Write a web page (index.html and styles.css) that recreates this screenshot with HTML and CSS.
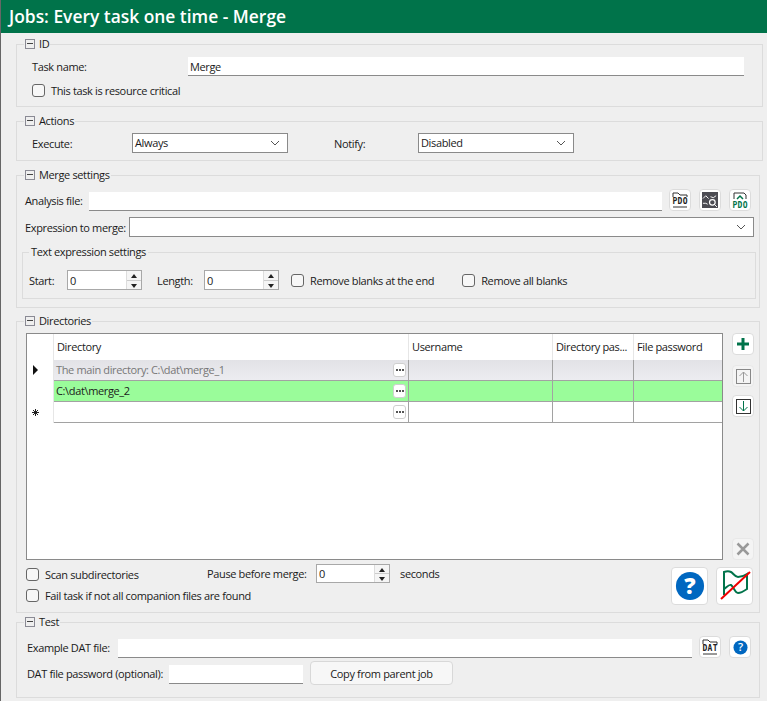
FILE: index.html
```html
<!DOCTYPE html>
<html lang="en">
<head>
    <meta charset="UTF-8">
    <meta name="viewport" content="width=device-width, initial-scale=1.0">
    <title>Jobs: Every task one time - Merge</title>
    <link rel="stylesheet" href="styles.css">
</head>
<body>
    <svg class="defs" width="0" height="0">
        <symbol id="chevron" viewBox="0 0 10 6"><path d="M1 1l4 4 4-4" fill="none" stroke="#555" stroke-width="1"/></symbol>
        <symbol id="dots" viewBox="0 0 8 2"><path d="M0 0h2v2H0zM3 0h2v2H3zM6 0h2v2H6z" fill="#555"/></symbol>
    </svg>

    <div class="titlebar">Jobs: Every task one time - Merge</div>

    <div class="form">
        <fieldset class="wide">
            <legend><span class="minus"></span>ID</legend>
            <div class="row row-task">
                <label class="lbl-task">Task name:</label>
                <input class="text task-input" value="Merge">
            </div>
            <label class="check check-critical"><span class="box"></span>This task is resource critical</label>
        </fieldset>

        <fieldset class="wide">
            <legend><span class="minus"></span>Actions</legend>
            <div class="row row-actions">
                <label class="lbl-execute">Execute:</label>
                <div class="combo combo-small"><span>Always</span><svg class="chev"><use href="#chevron"/></svg></div>
                <label class="lbl-notify">Notify:</label>
                <div class="combo combo-small"><span>Disabled</span><svg class="chev"><use href="#chevron"/></svg></div>
            </div>
        </fieldset>

        <fieldset>
            <legend><span class="minus"></span>Merge settings</legend>
            <div class="row row-analysis">
                <label class="lbl-analysis">Analysis file:</label>
                <input class="text analysis-input">
                <button class="icon-btn">
                    <svg width="18" height="18" viewBox="0 0 18 18"><path d="M2 6V2h5l2 2h7v2M2 16h14" fill="none" stroke="#333"/><text x="9" y="13" text-anchor="middle" textLength="15" class="icon-label">PDO</text></svg>
                </button>
                <button class="icon-btn">
                    <svg width="16" height="16" viewBox="0 0 17 17"><rect width="17" height="17" fill="#4b4b52"/><path d="M1 7l3-3 3 3M1 12h3l2 1" fill="none" stroke="#fff"/><circle cx="11" cy="11" r="3" fill="none" stroke="#fff" stroke-width="1.3"/><path d="M13 13l3 3M9 5l3 1 3-2" fill="none" stroke="#fff"/></svg>
                </button>
                <button class="icon-btn">
                    <svg width="18" height="18" viewBox="0 0 18 18"><path d="M3 8V2h10l2 2v4" fill="none" stroke="#333"/><path d="M6 8l3-3 3 3" fill="none" stroke="#00734a" stroke-width="1.5"/><text x="9" y="16.5" text-anchor="middle" textLength="15" class="icon-label green">PDO</text></svg>
                </button>
            </div>
            <div class="row row-expr">
                <label class="lbl-expr">Expression to merge:</label>
                <div class="combo combo-expr"><svg class="chev"><use href="#chevron"/></svg></div>
            </div>
            <fieldset class="inner">
                <legend>Text expression settings</legend>
                <div class="row row-text">
                    <label class="lbl-start">Start:</label>
                    <div class="spin"><input value="0"><div class="arrows"><i class="up"></i><i class="down"></i></div></div>
                    <label class="lbl-length">Length:</label>
                    <div class="spin"><input value="0"><div class="arrows"><i class="up"></i><i class="down"></i></div></div>
                    <label class="check check-end"><span class="box"></span>Remove blanks at the end</label>
                    <label class="check check-all"><span class="box"></span>Remove all blanks</label>
                </div>
            </fieldset>
        </fieldset>

        <fieldset>
            <legend><span class="minus"></span>Directories</legend>
            <div class="dir-area">
                <div class="grid">
                    <div class="grid-row head">
                        <div></div><div>Directory</div><div>Username</div><div>Directory pas...</div><div>File password</div>
                    </div>
                    <div class="grid-row main-dir">
                        <div class="rowhead"><span class="pointer"></span></div>
                        <div class="dir-cell">The main directory: C:\dat\merge_1<button class="dots"><svg width="8" height="2"><use href="#dots"/></svg></button></div>
                        <div></div><div></div><div></div>
                    </div>
                    <div class="grid-row green">
                        <div class="rowhead"></div>
                        <div class="dir-cell">C:\dat\merge_2<button class="dots"><svg width="8" height="2"><use href="#dots"/></svg></button></div>
                        <div></div><div></div><div></div>
                    </div>
                    <div class="grid-row">
                        <div class="rowhead star">
                            <svg width="7" height="7" viewBox="0 0 7 7"><path d="M3.500 0v7M0 3.500h7M1 1l5 5M6 1L1 6" stroke="#222"/></svg>
                        </div>
                        <div class="dir-cell"><button class="dots"><svg width="8" height="2"><use href="#dots"/></svg></button></div>
                        <div></div><div></div><div></div>
                    </div>
                </div>
                <div class="side">
                    <button class="icon-btn">
                        <svg width="14" height="14" viewBox="0 0 14 14"><path d="M7 1v12M1 7h12" stroke="#00734a" stroke-width="3"/></svg>
                    </button>
                    <button class="icon-btn off move-up">
                        <svg width="15" height="15" viewBox="0 0 15 15"><rect x=".5" y=".5" width="14" height="14" fill="none" stroke="#888"/><path d="M7.500 13V3M3.500 7l4-4 4 4" fill="none" stroke="#999"/></svg>
                    </button>
                    <button class="icon-btn">
                        <svg width="15" height="15" viewBox="0 0 15 15"><rect x=".5" y=".5" width="14" height="14" fill="none" stroke="#333"/><path d="M7.500 2v10M3.500 8l4 4 4-4" fill="none" stroke="#00734a"/></svg>
                    </button>
                    <button class="icon-btn off delete">
                        <svg width="14" height="14" viewBox="0 0 14 14"><path d="M1.500 1.500l11 11M12.500 1.500l-11 11" stroke="#999" stroke-width="2.500"/></svg>
                    </button>
                </div>
            </div>
            <div class="dir-bottom">
                <div class="dir-checks">
                    <label class="check"><span class="box"></span>Scan subdirectories</label>
                    <label class="check"><span class="box"></span>Fail task if not all companion files are found</label>
                </div>
                <div class="pause">
                    <label class="lbl-pause">Pause before merge:</label>
                    <div class="spin spin-pause"><input value="0"><div class="arrows"><i class="up"></i><i class="down"></i></div></div>
                    <span class="lbl-seconds">seconds</span>
                </div>
                <button class="icon-btn big">
                    <svg width="30" height="30" viewBox="0 0 32 32"><circle cx="16" cy="16" r="15" fill="#0067c0"/><text x="16" y="24.500" text-anchor="middle" class="help-mark">?</text></svg>
                </button>
                <button class="icon-btn big">
                    <svg width="32" height="32" viewBox="0 0 32 32"><path d="M5 25V2c3-1 5-1 7 0s4 5 7 5 6-1 9-3v15c-3 2-6 4-9 4s-5-7-7-8-5 3-7 4" fill="none" stroke="#00734a" stroke-width="2"/><path d="M2 29L31 2" stroke="#f00000" stroke-width="2"/></svg>
                </button>
            </div>
        </fieldset>

        <fieldset class="test">
            <legend><span class="minus"></span>Test</legend>
            <div class="row row-example">
                <label class="lbl-example">Example DAT file:</label>
                <input class="text example-input">
                <button class="icon-btn">
                    <svg width="18" height="18" viewBox="0 0 18 18"><path d="M2 6V2h5l2 2h7v2M2 16h14" fill="none" stroke="#333"/><text x="9" y="13" text-anchor="middle" textLength="15" class="icon-label">DAT</text></svg>
                </button>
                <button class="icon-btn">
                    <svg width="15" height="15" viewBox="0 0 32 32"><circle cx="16" cy="16" r="15" fill="#0067c0"/><text x="16" y="24.500" text-anchor="middle" class="help-mark thin">?</text></svg>
                </button>
            </div>
            <div class="row row-password">
                <label class="lbl-password">DAT file password (optional):</label>
                <input class="text password-input">
                <button class="plain-btn">Copy from parent job</button>
            </div>
        </fieldset>
    </div>
</body>
</html>
```

FILE: styles.css
```css
* {
    box-sizing: border-box;
}
html, body {
    margin: 0;
    height: 100%;
}
body {
    font-family: "Open Sans", "Noto Sans", sans-serif;
    font-size: 11px;
    letter-spacing: -0.36px;
    color: #1a1a1a;
    background-color: #efefef;
    border-left: 1px solid #666;
    overflow: hidden;
}
label {
    flex: none;
    white-space: nowrap;
}
.defs {
    position: absolute;
}
.titlebar {
    height: 33px;
    padding: 6px 0 0 8px;
    background-color: #00734a;
    color: white;
    font-size: 17.4px;
    font-weight: 600;
    letter-spacing: 0;
    line-height: 20px;
    white-space: nowrap;
}
.form {
    padding: 3px 7px 0 15px;
    display: flex;
    flex-direction: column;
}
fieldset {
    margin: 0 0 5px;
    padding: 0;
    border: 1px solid #dcdcdc;
    min-width: 0;
}
fieldset.wide {
    margin-right: -3px;
    margin-bottom: 6px;
}
fieldset.test {
    margin-top: -4px;
}
legend {
    display: flex;
    align-items: center;
    height: 16px;
    margin-left: 7px;
    padding: 0 1px;
    line-height: 16px;
}
.minus {
    width: 10px;
    height: 10px;
    margin-right: 4px;
    border: 1px solid #8a8a94;
    position: relative;
}
.minus::after {
    content: "";
    position: absolute;
    left: 1px;
    right: 1px;
    top: 3px;
    height: 1px;
    background-color: #444;
}
.row {
    display: flex;
    align-items: center;
}
.text {
    height: 19px;
    padding: 1px 2px 0;
    border: none;
    border-bottom: 1px solid #8a8a8a;
    background-color: white;
    font: inherit;
    letter-spacing: inherit;
    color: inherit;
    outline: none;
}
.check {
    display: flex;
    align-items: center;
    height: 14px;
    white-space: nowrap;
}
.box {
    flex: none;
    width: 13px;
    height: 13px;
    margin-right: 6px;
    border: 1px solid #666;
    border-radius: 3px;
    background-color: #f7f7f7;
}

/* ID */
.row-task {
    margin-top: 5px;
    padding-left: 15px;
}
.lbl-task {
    width: 156px;
}
.task-input {
    width: 556px;
}
.check-critical {
    margin: 7px 0 9px 15px;
}

/* Actions */
.combo {
    display: flex;
    align-items: center;
    justify-content: space-between;
    height: 20px;
    padding: 0 7px 1px 2px;
    border: 1px solid #8a8a8a;
    background-color: white;
}
.combo-small {
    width: 156px;
}
.chev {
    width: 10px;
    height: 6px;
}
.row-actions {
    margin: 4px 0 7px;
    padding-left: 15px;
}
.lbl-execute {
    width: 100px;
}
.lbl-notify {
    width: 84px;
    margin-left: 46px;
}

/* Merge settings */
.row-analysis {
    margin-top: 6px;
    padding-left: 8px;
}
.lbl-analysis {
    width: 64px;
}
.analysis-input {
    width: 574px;
    margin-top: 3px;
    margin-right: 7px;
}
.icon-btn {
    flex: none;
    display: flex;
    align-items: center;
    justify-content: center;
    width: 22px;
    height: 22px;
    margin: 0 8px 0 0;
    padding: 0;
    border: 1px solid #dcdcdc;
    border-radius: 4px;
    background-color: white;
}
.icon-btn.off {
    background-color: #f4f4f4;
    border-color: #e8e8e8;
}
.icon-label {
    font-family: "DejaVu Sans Mono", monospace;
    font-size: 8px;
    font-weight: bold;
    fill: #222;
}
.icon-label.green {
    fill: #00734a;
}
.help-mark {
    font-family: "Open Sans", sans-serif;
    font-size: 24px;
    font-weight: 800;
    fill: white;
}
.help-mark.thin {
    font-weight: 600;
}
.row-expr {
    margin-top: 6px;
    padding-left: 8px;
}
.lbl-expr {
    width: 104px;
}
.combo-expr {
    width: 625px;
    justify-content: flex-end;
}
.inner {
    margin: 7px 3px 8px 5px;
}
.inner legend {
    margin-left: 6px;
    padding: 0 2px;
}
.row-text {
    margin: 10px 0 8px;
    padding-left: 6px;
}
.lbl-start {
    width: 38px;
}
.lbl-length {
    width: 47px;
    margin-left: 15px;
}
.spin {
    display: flex;
    width: 75px;
    height: 20px;
    border: 1px solid #a8a8a8;
    background-color: white;
}
.spin input {
    flex: 1;
    width: 0;
    padding: 0 2px;
    border: none;
    background: none;
    font: inherit;
    color: inherit;
    outline: none;
}
.arrows {
    display: flex;
    flex-direction: column;
    width: 15px;
    border-left: 1px solid #ddd;
}
.arrows i {
    flex: 1;
    position: relative;
    background-color: #f5f5f5;
}
.arrows .down {
    border-top: 1px solid #ccc;
}
.arrows i::after {
    content: "";
    position: absolute;
    left: 4px;
    top: 3px;
    border-left: 3px solid transparent;
    border-right: 3px solid transparent;
}
.arrows .up::after {
    border-bottom: 4px solid #222;
}
.arrows .down::after {
    border-top: 4px solid #222;
}
.check-end {
    margin-left: 12px;
}
.check-all {
    margin-left: 28px;
}

/* Directories */
.dir-area {
    display: flex;
    height: 227px;
    margin: 4px 0 0 9px;
}
.grid {
    width: 697px;
    margin-right: 9px;
    border: 1px solid #8a8a8a;
    background-color: white;
}
.grid-row {
    display: grid;
    grid-template-columns: 27px 355px 144px 81px 1fr;
    height: 21px;
}
.grid-row > div {
    padding-left: 2px;
    line-height: 19px;
    border-right: 1px solid #a2a2a2;
    border-bottom: 1px solid #a2a2a2;
    white-space: nowrap;
    overflow: hidden;
}
.grid-row > div:last-child {
    border-right: none;
}
.grid-row > .rowhead {
    border-bottom: none;
    border-right-color: #e6e6e6;
    position: relative;
    background: white;
}
.head {
    height: 26px;
}
.grid-row.head > div {
    padding-left: 3px;
    line-height: 26px;
    border-right-color: #e6e6e6;
    border-bottom: none;
}
.main-dir > div {
    background: linear-gradient(#e2e2e6, #ececf0);
    color: #777;
}
.green > div {
    background-color: #9afc9a;
}
.dir-cell {
    position: relative;
}
.dots {
    position: absolute;
    right: 2px;
    top: 3px;
    display: flex;
    align-items: center;
    justify-content: center;
    width: 13px;
    height: 14px;
    padding: 0;
    border: 1px solid #cfcfcf;
    border-radius: 3px;
    background-color: white;
}
.pointer {
    position: absolute;
    left: 6px;
    top: 5px;
    border-top: 5px solid transparent;
    border-bottom: 5px solid transparent;
    border-left: 5px solid #111;
}
.grid-row > .star {
    display: flex;
    align-items: center;
    padding-left: 5px;
}
.side {
    display: flex;
    flex-direction: column;
    gap: 8px;
}
.side .icon-btn {
    margin: 0;
}
.side .move-up {
    margin-top: 2px;
}
.side .delete {
    margin-top: auto;
}
.dir-bottom {
    display: flex;
    align-items: flex-start;
    height: 52px;
    margin-left: 9px;
}
.dir-checks {
    width: 181px;
    display: flex;
    flex-direction: column;
    gap: 7px;
    margin-top: 7px;
    white-space: nowrap;
}
.pause {
    display: flex;
    align-items: center;
    width: 464px;
    margin-top: 4px;
}
.lbl-pause {
    width: 109px;
}
.spin-pause {
    width: 74px;
    height: 19px;
}
.lbl-seconds {
    margin-left: 10px;
}
.big {
    width: 37px;
    height: 38px;
    margin: 7px 8px 0 0;
}
.big:last-child {
    margin-right: 0;
}

/* Test */
.row-example {
    margin-top: 6px;
    padding-left: 10px;
}
.lbl-example {
    width: 91px;
}
.example-input {
    width: 575px;
    margin-top: 2px;
    margin-right: 7px;
}
.row-password {
    margin: 3px 0 12px;
    padding-left: 10px;
}
.lbl-password {
    width: 142px;
}
.password-input {
    width: 134px;
    margin-top: 2px;
    margin-right: 7px;
}
.plain-btn {
    width: 143px;
    height: 24px;
    padding: 0;
    border: 1px solid #d8d8d8;
    border-radius: 4px;
    background-color: #f7f7f7;
    font: inherit;
    letter-spacing: inherit;
    color: inherit;
}
```
